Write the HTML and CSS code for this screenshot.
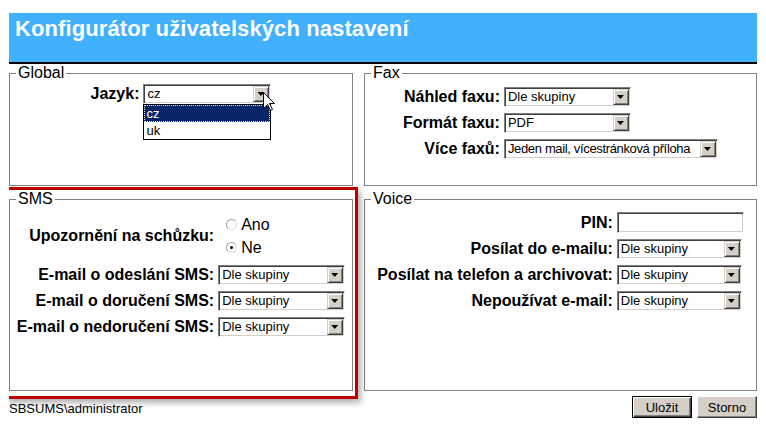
FILE: index.html
```html
<!DOCTYPE html>
<html lang="cs">
<head>
    <meta charset="UTF-8">
    <meta name="viewport" content="width=device-width, initial-scale=1.0">
    <title>Konfigurátor uživatelských nastavení</title>
    <link rel="stylesheet" href="styles.css">
</head>
<body>
    <div class="header">
        <h1>Konfigurátor uživatelských nastavení</h1>
    </div>

    <div class="panels">
        <fieldset class="box global">
            <legend>Global</legend>
            <div class="rows">
                <label>Jazyk:</label>
                <div class="combo lang">
                    <span class="val">cz</span><span class="arrow"></span>
                    <ul class="list">
                        <li class="sel">cz</li>
                        <li>uk</li>
                    </ul>
                    <svg class="cursor" width="13" height="20" viewBox="0 0 13 20">
                        <path d="M0.5 0.5 V16.5 L4.5 12.5 L7.5 18.5 L9.5 17.5 L6.5 11.5 H11.5 Z" fill="#fff" stroke="#000" stroke-width="1"/>
                    </svg>
                </div>
            </div>
        </fieldset>

        <fieldset class="box fax">
            <legend>Fax</legend>
            <div class="rows">
                <label>Náhled faxu:</label>
                <div class="combo"><span class="val">Dle skupiny</span><span class="arrow"></span></div>
                <label>Formát faxu:</label>
                <div class="combo"><span class="val">PDF</span><span class="arrow"></span></div>
                <label>Více faxů:</label>
                <div class="combo wide"><span class="val">Jeden mail, vícestránková příloha</span><span class="arrow"></span></div>
            </div>
        </fieldset>

        <div class="highlight">
            <fieldset class="box sms">
                <legend>SMS</legend>
                <div class="rows">
                    <label>Upozornění na schůzku:</label>
                    <div class="radios">
                        <label class="radio"><input type="radio" name="upozorneni"> Ano</label>
                        <label class="radio"><input type="radio" name="upozorneni" checked> Ne</label>
                    </div>
                    <label>E-mail o odeslání SMS:</label>
                    <div class="combo"><span class="val">Dle skupiny</span><span class="arrow"></span></div>
                    <label>E-mail o doručení SMS:</label>
                    <div class="combo"><span class="val">Dle skupiny</span><span class="arrow"></span></div>
                    <label>E-mail o nedoručení SMS:</label>
                    <div class="combo"><span class="val">Dle skupiny</span><span class="arrow"></span></div>
                </div>
            </fieldset>
        </div>

        <fieldset class="box voice">
            <legend>Voice</legend>
            <div class="rows">
                <label>PIN:</label>
                <input class="pin" type="text">
                <label>Posílat do e-mailu:</label>
                <div class="combo narrow"><span class="val">Dle skupiny</span><span class="arrow"></span></div>
                <label>Posílat na telefon a archivovat:</label>
                <div class="combo narrow"><span class="val">Dle skupiny</span><span class="arrow"></span></div>
                <label>Nepoužívat e-mail:</label>
                <div class="combo narrow"><span class="val">Dle skupiny</span><span class="arrow"></span></div>
            </div>
        </fieldset>
    </div>

    <div class="footer">
        <span class="user">SBSUMS\administrator</span>
        <div class="buttons">
            <button class="btn default">Uložit</button>
            <button class="btn">Storno</button>
        </div>
    </div>
</body>
</html>
```

FILE: styles.css
```css
body {
    font-family: "Liberation Sans", Arial, sans-serif;
    margin: 13px 9px 0;
    padding: 0;
    background-color: #fff;
    color: #000;
}

.header {
    background-color: #40b0ff;
    border-bottom: 2px solid #000;
    height: 49px;
}
.header h1 {
    margin: 0;
    padding: 3px 6px 0;
    font-size: 22px;
    font-weight: bold;
    letter-spacing: 0.1px;
    color: #fff;
}

.panels {
    display: grid;
    grid-template-columns: 344px 393px;
    grid-template-rows: 122px 201px;
    column-gap: 11px;
    row-gap: 4px;
}

.box {
    margin: 0;
    padding: 0 6px;
    min-width: 0;
    border: 1px solid #808080;
}
.box legend {
    padding: 0 2px;
    font-size: 16px;
    line-height: 18px;
}
.global {
    padding-top: 2px;
}
.fax {
    padding-top: 5px;
}
.sms {
    padding-top: 5px;
    height: 100%;
    box-sizing: border-box;
}
.voice {
    padding-top: 4px;
}

.rows {
    display: grid;
    grid-template-columns: auto auto;
    justify-content: center;
    align-items: center;
    column-gap: 4px;
    row-gap: 6px;
}
.rows > label {
    text-align: right;
    font-size: 16px;
    font-weight: bold;
    white-space: nowrap;
}

/* windows classic combo box */
.combo {
    position: relative;
    display: flex;
    width: 127px;
    height: 20px;
    box-sizing: border-box;
    padding: 1px;
    border: 1px solid;
    border-color: #808080 #fff #fff #808080;
    box-shadow: inset 1px 1px #404040, inset -1px -1px #d4d0c8;
    background-color: #fff;
    font-size: 13px;
}
.combo.lang {
    width: 128px;
}
.combo.wide {
    width: 214px;
}
.combo.wide .val {
    letter-spacing: -0.35px;
}
.combo.narrow {
    width: 125px;
}
.combo .val {
    flex: 1;
    padding-left: 2px;
    line-height: 16px;
    white-space: nowrap;
    overflow: hidden;
}
.combo .arrow {
    position: relative;
    width: 16px;
    height: 16px;
    box-sizing: border-box;
    border: 1px solid;
    border-color: #d4d0c8 #404040 #404040 #d4d0c8;
    box-shadow: inset 1px 1px #fff, inset -1px -1px #808080;
    background-color: #d4d0c8;
}
.combo .arrow::after {
    content: "";
    position: absolute;
    left: 3px;
    top: 5px;
    width: 7px;
    height: 4px;
    background-color: #000;
    clip-path: polygon(0 0, 100% 0, 50% 100%);
}

.list {
    position: absolute;
    left: -1px;
    top: 19px;
    width: 128px;
    margin: 0;
    padding: 0;
    list-style: none;
    box-sizing: border-box;
    border: 1px solid #000;
    background-color: #fff;
    z-index: 2;
}
.list li {
    height: 17px;
    line-height: 17px;
    padding-left: 2px;
}
.list li.sel {
    background-color: #0a246a;
    color: #fff;
    outline: 1px dotted #ffe8a0;
    outline-offset: -1px;
}

.cursor {
    position: absolute;
    left: 119px;
    top: 7px;
    z-index: 3;
}

.radios {
    padding-left: 8px;
}
.radio {
    display: flex;
    align-items: center;
    gap: 4px;
    height: 23px;
    font-size: 16px;
}
.radio input {
    appearance: none;
    margin: 0;
    width: 11px;
    height: 11px;
    border-radius: 50%;
    border: 1px solid;
    border-color: #a0a0a0 #e0e0e0 #e0e0e0 #a0a0a0;
    background-color: #fff;
    position: relative;
}
.radio input:checked::after {
    content: "";
    position: absolute;
    left: 3px;
    top: 3px;
    width: 3px;
    height: 3px;
    border-radius: 50%;
    background-color: #000;
}

.pin {
    width: 127px;
    height: 21px;
    box-sizing: border-box;
    margin: 0;
    padding: 1px 3px;
    border: 1px solid;
    border-color: #808080 #fff #fff #808080;
    box-shadow: inset 1px 1px #404040, inset -1px -1px #d4d0c8;
    font-size: 13px;
}

/* red annotation around the SMS box */
.highlight {
    position: relative;
}
.highlight::after {
    content: "";
    position: absolute;
    top: -3px;
    left: -4px;
    right: -5px;
    bottom: -8px;
    border: 3px solid #c00000;
    box-shadow: 3px 4px 6px rgba(0, 0, 0, 0.3);
    pointer-events: none;
}

.footer {
    position: relative;
    display: flex;
    justify-content: space-between;
    align-items: center;
    margin-top: 5px;
}
.user {
    font-size: 13px;
    padding-top: 2px;
}
.buttons {
    display: flex;
    gap: 5px;
}
.btn {
    width: 60px;
    height: 22px;
    padding: 0;
    font-family: "Liberation Sans", Arial, sans-serif;
    font-size: 13px;
    color: #000;
    background-color: #d4d0c8;
    border: 1px solid;
    border-color: #fff #404040 #404040 #fff;
    box-shadow: inset -1px -1px #808080;
}
.btn.default {
    border-color: #000;
    box-shadow: inset 1px 1px #fff, inset -1px -1px #404040, inset -2px -2px #808080;
}
```
